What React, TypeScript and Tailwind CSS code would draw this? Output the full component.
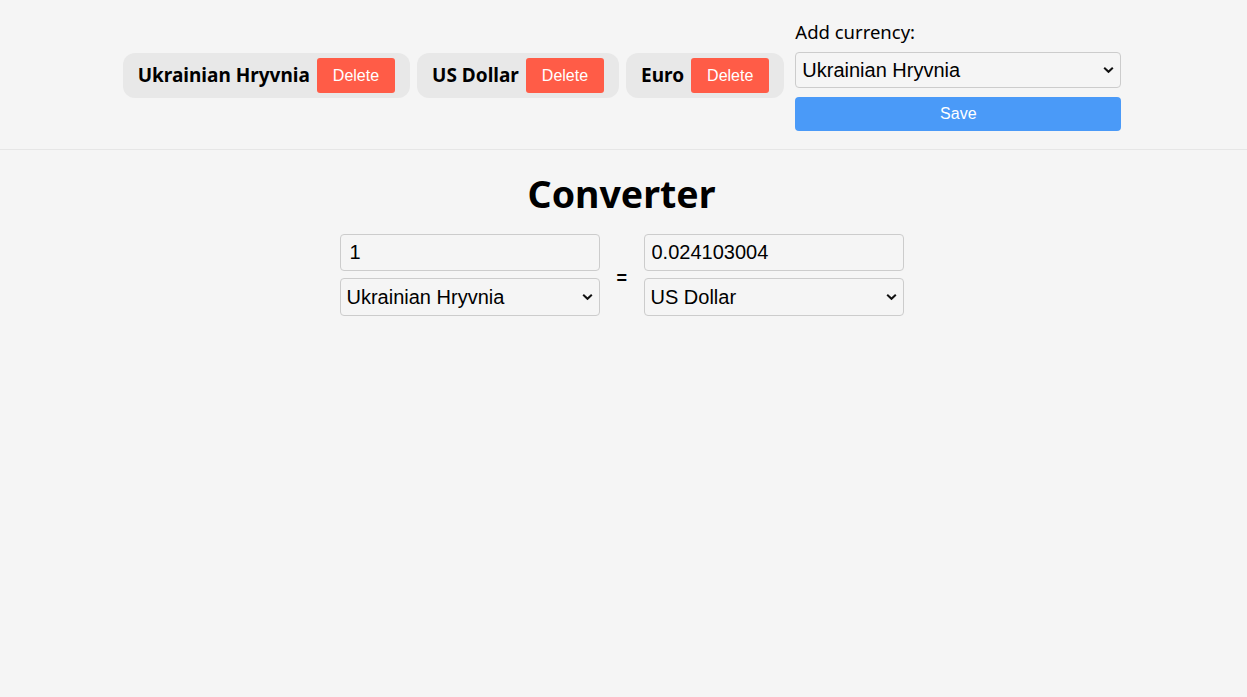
import { useState } from "react";

const CURRENCIES = ["Ukrainian Hryvnia", "US Dollar", "Euro"];

const Chevron = () => (
  <svg
    width="11"
    height="7"
    viewBox="0 0 11 7"
    fill="none"
    className="absolute right-[7px] top-1/2 -translate-y-1/2 pointer-events-none"
  >
    <path d="M1.2 1.2L5.5 5.3L9.8 1.2" stroke="#111111" strokeWidth="2" />
  </svg>
);

const CurrencySelect = ({
  value,
  onChange,
  height,
}: {
  value: string;
  onChange: (v: string) => void;
  height: string;
}) => (
  <div className="relative w-full">
    <select
      value={value}
      onChange={(e) => onChange(e.target.value)}
      className={`appearance-none w-full ${height} pl-[6px] pr-[24px] rounded-[4px] border border-[#cccccc] bg-[#f5f5f5] text-[20px] text-black font-['Liberation_Sans',Arial,sans-serif] outline-none`}
    >
      {CURRENCIES.map((c) => (
        <option key={c}>{c}</option>
      ))}
    </select>
    <Chevron />
  </div>
);

const CurrencyChip = ({ name }: { name: string }) => {
  return (
    <div className="flex items-center gap-[7px] h-[45px] pl-[15px] pr-[15px] rounded-[12px] bg-[#e8e8e8]">
      <span className="font-['Noto_Sans',sans-serif] font-bold text-[19px] text-black">
        {name}
      </span>
      <button className="h-[35px] px-[16px] rounded-[3px] bg-[#ff5c47] text-white text-[16px] font-['Liberation_Sans',Arial,sans-serif]">
        Delete
      </button>
    </div>
  );
};

export default function App() {
  const [amount, setAmount] = useState("1");
  const [from, setFrom] = useState("Ukrainian Hryvnia");
  const [to, setTo] = useState("US Dollar");
  const [addValue, setAddValue] = useState("Ukrainian Hryvnia");

  return (
    <div className="min-h-[697px] bg-[#f5f5f5] font-['Noto_Sans',sans-serif]">
      <header className="flex justify-center items-center gap-[8px] pt-[20px] pb-[18px] pr-[3px] border-b border-[#e6e6e6]">
        <div className="flex items-center gap-[7px]">
          {CURRENCIES.map((c) => (
            <CurrencyChip key={c} name={c} />
          ))}
        </div>
        <div className="flex flex-col w-[326px] ml-[3px]">
          <label className="text-[18.5px] leading-[24px] mb-[8px] text-black">Add currency:</label>
          <CurrencySelect value={addValue} onChange={setAddValue} height="h-[36px]" />
          <button className="mt-[9px] h-[34px] rounded-[4px] bg-[#4a9af8] text-white text-[16px] font-['Liberation_Sans',Arial,sans-serif]">
            Save
          </button>
        </div>
      </header>

      <main className="flex flex-col items-center pt-[20px] pr-[4px]">
        <h1 className="text-[37.5px] leading-[48px] font-bold text-black mb-[16px]">Converter</h1>
        <div className="flex items-center gap-[17px]">
          <div className="flex flex-col gap-[7px] w-[260px]">
            <input
              value={amount}
              onChange={(e) => setAmount(e.target.value)}
              className="h-[37px] px-[9px] rounded-[4px] border border-[#cccccc] bg-[#f5f5f5] text-[20px] text-black font-['Liberation_Sans',Arial,sans-serif] outline-none"
            />
            <CurrencySelect value={from} onChange={setFrom} height="h-[38px]" />
          </div>
          <span className="text-[18px] font-bold text-black w-[10px] text-center font-['Liberation_Sans',Arial,sans-serif] translate-y-[3px]">=</span>
          <div className="flex flex-col gap-[7px] w-[260px]">
            <input
              value="0.024103004"
              readOnly
              className="h-[37px] px-[7px] rounded-[4px] border border-[#cccccc] bg-[#f5f5f5] text-[20px] text-black font-['Liberation_Sans',Arial,sans-serif] outline-none"
            />
            <CurrencySelect value={to} onChange={setTo} height="h-[38px]" />
          </div>
        </div>
      </main>
    </div>
  );
}
